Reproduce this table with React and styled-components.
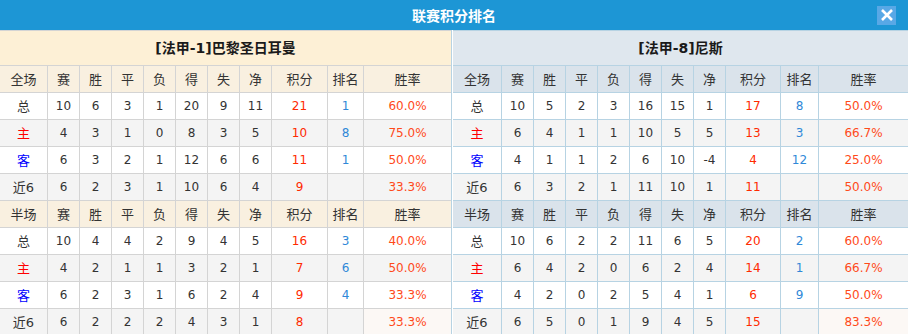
import React from "react";
import styled, { createGlobalStyle } from "styled-components";

const GlobalStyle = createGlobalStyle`
  body {
    margin: 0;
    background: #fff;
    font-family: "DejaVu Sans", "Noto Sans CJK SC", sans-serif;
  }
`;

const THEMES = {
  home: {
    line: "#d4d4d4",
    team: "#fdf0d6",
    head: "#f9f0e0",
    cols: "48px repeat(7, 32px) 56px 36px 1fr",
  },
  away: {
    line: "#b7d3e3",
    team: "#dfe7ee",
    head: "#dae3eb",
    cols: "49px repeat(7, 32px) 55px 38px 1fr",
  },
};

const Dialog = styled.div`
  width: 908px;
  height: 334px;
  overflow: hidden;
`;

const TitleBar = styled.div`
  height: 30px;
  background: #1d96d5;
  display: grid;
  grid-template-columns: 1fr auto 1fr;
  align-items: center;
`;

const Title = styled.div`
  grid-column: 2;
  color: #fff;
  font-family: "Noto Sans CJK SC", sans-serif;
  font-weight: bold;
  font-size: 14px;
  line-height: 1;
`;

const Close = styled.button`
  grid-column: 3;
  justify-self: end;
  margin-right: 12px;
  width: 19px;
  height: 19px;
  padding: 0;
  border: 0;
  background: #58a8e6;
  display: flex;
  align-items: center;
  justify-content: center;
`;

const Panels = styled.div`
  display: flex;
`;

const Panel = styled.div`
  width: ${(p) => p.w}px;
  border-left: ${(p) => (p.edge ? `1px solid ${p.line}` : "none")};
  padding-left: ${(p) => (p.edge ? 1 : 0)}px;
  background: #fff;
`;

const TeamName = styled.div`
  height: 34px;
  border-top: 1px solid ${(p) => p.line};
  border-bottom: 1px solid ${(p) => p.line};
  background: ${(p) => p.bg};
  display: flex;
  align-items: center;
  justify-content: center;
  font-family: "DejaVu Sans", "Noto Sans CJK SC", sans-serif;
  font-weight: bold;
  font-size: 14px;
  line-height: 1;
  color: #1a1a1a;
`;

const Row = styled.div`
  display: grid;
  grid-template-columns: ${(p) => p.cols};
  height: 26px;
  border-bottom: 1px solid ${(p) => p.line};
  background: ${(p) => p.bg};
`;

const Cell = styled.div`
  display: flex;
  align-items: center;
  justify-content: center;
  font-size: 12px;
  line-height: 1;
  color: ${(p) => p.color || "#333"};
  background: ${(p) => p.bg || "transparent"};
  border-right: ${(p) => (p.last ? "none" : `1px solid ${p.line}`)};
`;

const Label = styled.span`
  display: block;
  font-family: "DejaVu Sans", "Noto Sans CJK SC", sans-serif;
  font-size: 13px;
  line-height: 1;
  color: ${(p) => p.color || "#333"};
`;

const HEADS = ["赛", "胜", "平", "负", "得", "失", "净", "积分", "排名", "胜率"];
const LABEL_COLORS = { 主: "#f00", 客: "#00f" };

const TEAMS = [
  {
    key: "home",
    name: "[法甲-1]巴黎圣日耳曼",
    full: [
      ["总", 10, 6, 3, 1, 20, 9, 11, 21, 1, "60.0%"],
      ["主", 4, 3, 1, 0, 8, 3, 5, 10, 8, "75.0%"],
      ["客", 6, 3, 2, 1, 12, 6, 6, 11, 1, "50.0%"],
      ["近6", 6, 2, 3, 1, 10, 6, 4, 9, "", "33.3%"],
    ],
    half: [
      ["总", 10, 4, 4, 2, 9, 4, 5, 16, 3, "40.0%"],
      ["主", 4, 2, 1, 1, 3, 2, 1, 7, 6, "50.0%"],
      ["客", 6, 2, 3, 1, 6, 2, 4, 9, 4, "33.3%"],
      ["近6", 6, 2, 2, 2, 4, 3, 1, 8, "", "33.3%"],
    ],
  },
  {
    key: "away",
    name: "[法甲-8]尼斯",
    full: [
      ["总", 10, 5, 2, 3, 16, 15, 1, 17, 8, "50.0%"],
      ["主", 6, 4, 1, 1, 10, 5, 5, 13, 3, "66.7%"],
      ["客", 4, 1, 1, 2, 6, 10, -4, 4, 12, "25.0%"],
      ["近6", 6, 3, 2, 1, 11, 10, 1, 11, "", "50.0%"],
    ],
    half: [
      ["总", 10, 6, 2, 2, 11, 6, 5, 20, 2, "60.0%"],
      ["主", 6, 4, 2, 0, 6, 2, 4, 14, 1, "66.7%"],
      ["客", 4, 2, 0, 2, 5, 4, 1, 6, 9, "50.0%"],
      ["近6", 6, 5, 0, 1, 9, 4, 5, 15, "", "83.3%"],
    ],
  },
];

const valueColor = (i) => {
  if (i === 8) return "#ff2a00";
  if (i === 9) return "#2f88d8";
  if (i === 10) return "#ff4a1a";
  return undefined;
};

const HeadRow = ({ t, first }) => (
  <Row cols={t.cols} line={t.line} bg={t.head}>
    {[first, ...HEADS].map((h, i) => (
      <Cell key={i} line={t.line} last={i === HEADS.length}>
        <Label>{h}</Label>
      </Cell>
    ))}
  </Row>
);

const Section = ({ t, first, rows, tail }) => (
  <>
    <HeadRow t={t} first={first} />
    {rows.map((r, ri) => (
      <Row key={ri} cols={t.cols} line={t.line} bg={ri % 2 ? "#f4f4f4" : "#fff"}>
        {r.map((v, i) => (
          <Cell
            key={i}
            line={t.line}
            last={i === r.length - 1}
            color={valueColor(i)}
            bg={tail && ri === rows.length - 1 && i === r.length - 1 ? "#fcf8f5" : undefined}
          >
            {i === 0 ? <Label color={LABEL_COLORS[v]}>{v}</Label> : v}
          </Cell>
        ))}
      </Row>
    ))}
  </>
);

const App = () => (
  <Dialog>
    <GlobalStyle />
    <TitleBar>
      <Title>联赛积分排名</Title>
      <Close aria-label="close">
        <svg width="14" height="14" viewBox="0 0 14 14">
          <path d="M2 2 L12 12 M12 2 L2 12" stroke="#fff" strokeWidth="2.6" />
        </svg>
      </Close>
    </TitleBar>
    <Panels>
      {TEAMS.map((team, n) => {
        const t = THEMES[team.key];
        return (
          <Panel key={team.key} w={n ? 456 : 452} edge={n > 0} line={t.line}>
            <TeamName line={t.line} bg={t.team}>{team.name}</TeamName>
            <Section t={t} first="全场" rows={team.full} />
            <Section t={t} first="半场" rows={team.half} tail />
          </Panel>
        );
      })}
    </Panels>
  </Dialog>
);

export default App;
